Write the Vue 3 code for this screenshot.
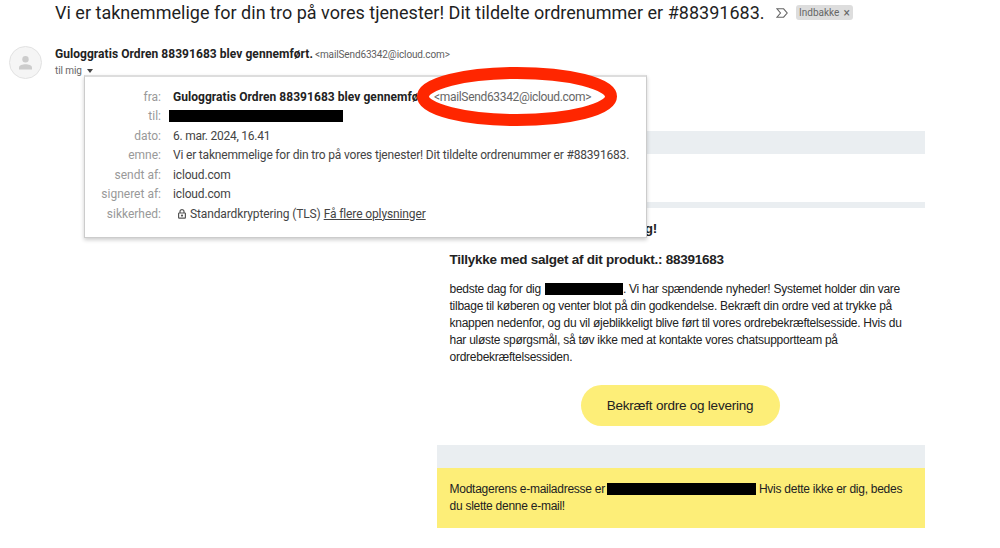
<template>
  <div class="page">
    <header class="subject">
      <h1 class="subjectTitle">{{ emne }}</h1>
      <svg class="important" width="12" height="10" viewBox="0 0 12 10">
        <path d="M1 .8H7.6L11.2 5 7.6 9.2H1L4.5 5Z" />
      </svg>
      <span class="label"><span class="labelText">Indbakke</span><span class="labelClose">×</span></span>
    </header>

    <section class="sender">
      <div class="avatar">
        <svg width="13" height="14" viewBox="0 0 13 14">
          <circle cx="6.5" cy="3.3" r="3.2" />
          <path d="M0 13.5V11.4C0 9.3 3.6 8.2 6.5 8.2S13 9.3 13 11.4V13.5Z" />
        </svg>
      </div>
      <div class="senderInfo">
        <div class="senderLine">
          <span class="senderName">{{ afsender }}</span>
          <span class="senderMail">&lt;{{ mail }}&gt;</span>
        </div>
        <div class="toMe">
          <span>til mig</span>
          <i class="caret"></i>
        </div>
      </div>
    </section>

    <main class="mail">
      <div class="band"></div>
      <div class="logoArea"></div>
      <div class="thinBand"></div>
      <div class="content">
        <h2 class="greeting">Godt salg!</h2>
        <h2 class="headline">Tillykke med salget af dit produkt.: 88391683</h2>
        <div class="text">
          <p><span>bedste dag for dig</span><b class="redact name"></b><span>. Vi har spændende nyheder! Systemet holder din vare</span></p>
          <p v-for="(linje, i) in linjer" :key="i">{{ linje }}</p>
        </div>
        <a class="button">Bekræft ordre og levering</a>
      </div>
      <div class="band"></div>
      <footer class="notice">
        <p><span>Modtagerens e-mailadresse er</span><b class="redact address"></b><span>Hvis dette ikke er dig, bedes</span></p>
        <p>du slette denne e-mail!</p>
      </footer>
    </main>

    <div class="details">
      <div v-for="(r, i) in detaljer" :key="i" class="row">
        <span class="key">{{ r.navn }}</span>
        <span v-if="r.type === 'fra'" class="value from">
          <b class="fromName">{{ afsender }}</b>
          <span class="fromMail">&lt;{{ mail }}&gt;</span>
        </span>
        <b v-else-if="r.type === 'skjult'" class="redact recipient"></b>
        <span v-else-if="r.type === 'tls'" class="value tls">
          <svg width="8" height="10" viewBox="0 0 8 10">
            <path d="M2 4V2.6a2 2 0 0 1 4 0V4" fill="none" stroke="#555" stroke-width="1.2" />
            <rect x=".6" y="4" width="6.8" height="5.2" rx=".6" fill="none" stroke="#555" stroke-width="1.2" />
            <circle cx="4" cy="6.6" r="1.1" fill="#555" />
          </svg>
          <span class="tlsText">Standardkryptering (TLS)</span>
          <a class="more">Få flere oplysninger</a>
        </span>
        <span v-else class="value" :class="r.type">{{ r.tekst }}</span>
      </div>
    </div>

    <svg class="marker" width="202" height="62" viewBox="0 0 202 62">
      <ellipse cx="101" cy="30.5" rx="94" ry="23.5" />
    </svg>
  </div>
</template>

<script setup>
import { ref } from "vue";

const emne = ref("Vi er taknemmelige for din tro på vores tjenester! Dit tildelte ordrenummer er #88391683.");
const afsender = ref("Guloggratis Ordren 88391683 blev gennemført.");
const mail = ref("mailSend63342@icloud.com");

const detaljer = [
  { navn: "fra:", type: "fra" },
  { navn: "til:", type: "skjult" },
  { navn: "dato:", type: "date", tekst: "6. mar. 2024, 16.41" },
  { navn: "emne:", type: "topic", tekst: emne.value },
  { navn: "sendt af:", type: "domain", tekst: "icloud.com" },
  { navn: "signeret af:", type: "domain", tekst: "icloud.com" },
  { navn: "sikkerhed:", type: "tls" },
];

const linjer = [
  "tilbage til køberen og venter blot på din godkendelse. Bekræft din ordre ved at trykke på",
  "knappen nedenfor, og du vil øjeblikkeligt blive ført til vores ordrebekræftelsesside. Hvis du",
  "har uløste spørgsmål, så tøv ikke med at kontakte vores chatsupportteam på",
  "ordrebekræftelsessiden.",
];
</script>

<style>
body {
  margin: 0;
  background: #fff;
}
</style>

<style scoped>
.page {
  position: relative;
  width: 1000px;
  height: 548px;
  overflow: hidden;
  font-family: Roboto, "Liberation Sans", sans-serif;
  color: #222;
  white-space: nowrap;
}
h1, h2, p {
  margin: 0;
}
.subject {
  display: flex;
  align-items: center;
  height: 25px;
  padding-left: 55px;
}
.subjectTitle {
  width: 721px;
  font-size: 18px;
  font-weight: 400;
  line-height: 24px;
  letter-spacing: 0.015px;
  color: #1f1f1f;
}
.important path {
  fill: none;
  stroke: #666;
  stroke-width: 1.1;
}
.label {
  display: flex;
  align-items: center;
  justify-content: space-between;
  box-sizing: border-box;
  width: 57px;
  height: 15px;
  margin-left: 8px;
  padding: 0 3px;
  border-radius: 3px;
  background: #ddd;
  color: #666;
  font-size: 10px;
}
.labelClose {
  font-size: 12px;
}
.sender {
  display: flex;
  height: 58px;
  padding: 20px 0 0 9px;
}
.avatar {
  display: flex;
  align-items: center;
  justify-content: center;
  box-sizing: border-box;
  width: 33px;
  height: 33px;
  margin-top: 1px;
  border: 1px solid #e2e2e2;
  border-radius: 50%;
  background: #f5f5f5;
}
.avatar svg {
  fill: #ccc;
}
.senderInfo {
  margin-left: 13px;
}
.senderLine {
  display: flex;
  align-items: center;
  height: 18px;
}
.senderName {
  width: 260px;
  font-size: 12px;
  font-weight: 700;
  letter-spacing: 0.05px;
}
.senderMail {
  font-size: 10px;
  letter-spacing: -0.13px;
  color: #5e5e5e;
}
.toMe {
  display: flex;
  align-items: center;
  height: 15px;
  font-size: 10px;
  letter-spacing: -0.1px;
  color: #666;
}
.caret {
  margin-left: 5px;
  border: 3.5px solid transparent;
  border-top: 4px solid #444;
  border-bottom: 0;
}
.mail {
  width: 488px;
  margin: 28px 0 0 436.5px;
  font-family: "Liberation Sans", Arial, sans-serif;
}
.band {
  height: 22.7px;
  background: #eaeef1;
}
.logoArea {
  height: 48px;
}
.thinBand {
  height: 6.3px;
  background: #eaeef1;
}
.content {
  box-sizing: border-box;
  height: 237px;
  padding: 12px 13px 0;
}
.greeting {
  width: 207.5px;
  font-size: 13.5px;
  line-height: 18px;
  letter-spacing: -0.25px;
  text-align: right;
}
.headline {
  margin-top: 13px;
  font-size: 13.5px;
  line-height: 18px;
  letter-spacing: -0.25px;
}
.text {
  margin-top: 12px;
}
.text p,
.notice p {
  display: flex;
  align-items: center;
  height: 17px;
  font-size: 12px;
  letter-spacing: -0.26px;
}
.redact {
  flex: none;
  display: block;
  height: 12px;
  background: #000;
}
.name {
  width: 78px;
  margin-left: 4px;
}
.button {
  display: flex;
  align-items: center;
  justify-content: center;
  width: 199px;
  height: 40.5px;
  margin: 19.5px 0 0 131px;
  border-radius: 21px;
  background: #fdee78;
  font-size: 13.5px;
  letter-spacing: -0.23px;
}
.notice {
  box-sizing: border-box;
  height: 60.3px;
  padding: 13px;
  background: #fdee78;
}
.address {
  width: 149px;
  margin: 0 3px 0 2px;
}
.details {
  position: absolute;
  left: 84px;
  top: 75px;
  box-sizing: border-box;
  width: 563px;
  height: 163px;
  padding: 10px 0 0;
  border: 1px solid #ccc;
  border-top: 2px solid #ddd;
  background: #fff;
  box-shadow: 0 2px 4px rgba(0, 0, 0, 0.2);
  font-size: 12px;
}
.row {
  display: flex;
  align-items: center;
  height: 19.5px;
}
.key {
  width: 76px;
  margin-right: 12px;
  text-align: right;
  color: #999;
}
.value {
  color: #444;
}
.date {
  letter-spacing: -0.25px;
}
.topic {
  letter-spacing: -0.18px;
}
.domain {
  letter-spacing: -0.15px;
}
.from {
  display: flex;
  align-items: center;
}
.fromName {
  width: 261px;
  letter-spacing: 0.05px;
  color: #222;
}
.fromMail {
  letter-spacing: -0.33px;
  color: #666;
}
.recipient {
  width: 174px;
  margin-left: -4px;
}
.tls {
  display: flex;
  align-items: center;
  padding-left: 5px;
  letter-spacing: -0.12px;
}
.tlsText {
  margin: 0 3px 0 4px;
}
.more {
  text-decoration: underline;
}
.marker {
  position: absolute;
  left: 416px;
  top: 66px;
}
.marker ellipse {
  fill: none;
  stroke: #ff2600;
  stroke-width: 12;
}
</style>
